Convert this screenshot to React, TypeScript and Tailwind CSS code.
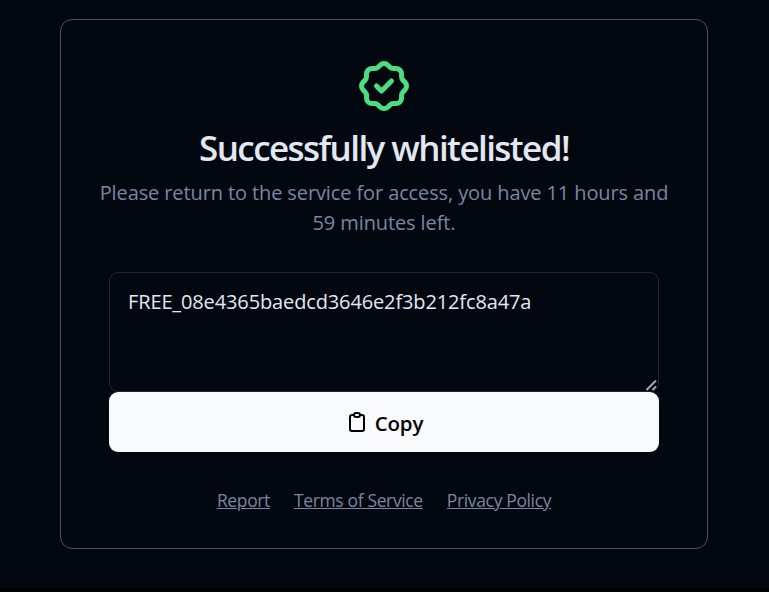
import React, { useState } from "react";
import { TbClipboard, TbRosetteDiscountCheck } from "react-icons/tb";

type FooterLink = {
  label: string;
  href: string;
};

const links: FooterLink[] = [
  { label: "Report", href: "#report" },
  { label: "Terms of Service", href: "#terms" },
  { label: "Privacy Policy", href: "#privacy" },
];

const App: React.FC = () => {
  const [token, setToken] = useState("FREE_08e4365baedcd3646e2f3b212fc8a47a");

  const copyToken = () => {
    navigator.clipboard?.writeText(token);
  };

  return (
    <div className="h-screen bg-black font-['Segoe_UI','Open_Sans',sans-serif]">
      <main className="h-[588px] bg-[#020710] px-[60px] pt-[19px]">
        <div className="flex h-[530px] w-[648px] flex-col items-center rounded-xl border border-[#4b5563] pt-9">
          <TbRosetteDiscountCheck className="size-[60px] text-[#4ade80]" />
          <h1 className="mt-2 text-[35px] leading-[48px] font-semibold tracking-[-1.57px] whitespace-nowrap text-slate-200">
            Successfully whitelisted!
          </h1>
          <p className="mt-1.5 w-[580px] text-center text-[20px] leading-[30px] tracking-[-0.11px] text-[#7888a0]">
            Please return to the service for access, you have 11 hours and
            <br />
            59 minutes left.
          </p>
          <div className="relative mt-[34px] shrink-0">
            <textarea
              value={token}
              onChange={(e) => setToken(e.target.value)}
              className="block h-[120px] w-[550px] resize-none rounded-[9px] border border-[#1f2530] px-[18px] py-[14px] text-[20px] leading-[30px] tracking-[-0.13px] text-slate-200 outline-none"
            />
            {/* resize grip */}
            <svg
              className="pointer-events-none absolute right-[2px] bottom-[1px] size-[11px]"
              viewBox="0 0 11 11"
              fill="none"
              stroke="#a8a8a8"
              strokeWidth="2"
            >
              <path d="M0.5 10L10 0.5M6.5 10L10 6.5" />
            </svg>
          </div>
          <button
            onClick={copyToken}
            className="flex h-[60px] w-[550px] shrink-0 items-center justify-center gap-1.5 rounded-[9px] bg-slate-50 text-[20.5px] font-semibold tracking-[-0.2px] text-[#020205]"
          >
            <TbClipboard className="size-6" />
            <span className="pt-[3px]">Copy</span>
          </button>
          <div className="mt-[35px] flex gap-6 text-[17.5px] leading-[27px] tracking-[-0.36px] text-[#7888a0]">
            {links.map((link) => (
              <a key={link.label} href={link.href} className="underline">
                {link.label}
              </a>
            ))}
          </div>
        </div>
      </main>
    </div>
  );
};

export default App;
